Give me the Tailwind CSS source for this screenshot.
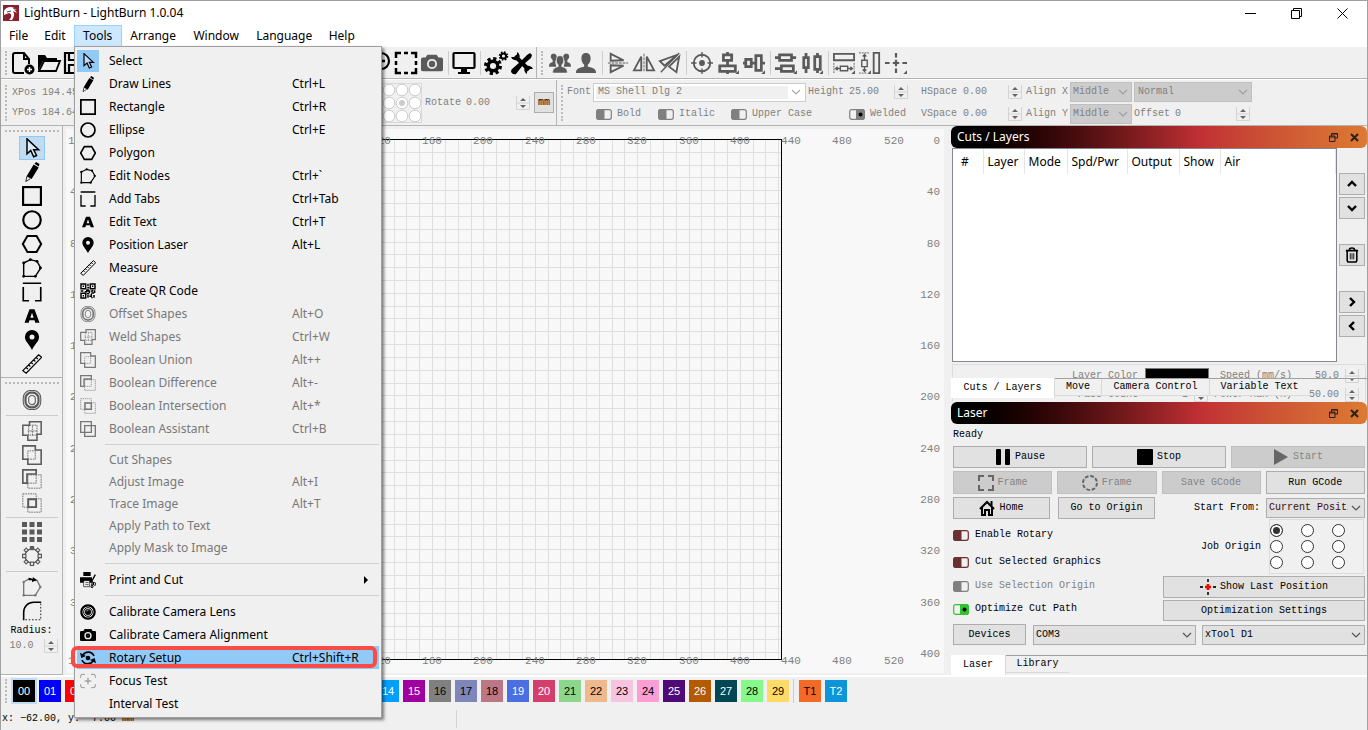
<!DOCTYPE html>
<html lang="en">
<head>
    <meta charset="UTF-8">
    <meta name="viewport" content="width=device-width, initial-scale=1.0">
    <title>LightBurn - LightBurn 1.0.04</title>
    <script src="https://cdn.jsdelivr.net/npm/@tailwindcss/browser@4"></script>
</head>
<body class="bg-[#f0f0f0] text-black font-['Liberation_Mono',monospace] text-[10px] leading-3">

    <!-- Icon sprite -->
    <svg class="hidden">
        <defs>
            <symbol id="cursor" viewBox="0 0 24 24"><path d="M6 1v18l4.500-4 3.500 7.500 3.500-1.500-3.500-7h6z" fill="#fff" fill-opacity=".4" stroke="currentColor" stroke-width="1.800"/></symbol>
            <symbol id="pencil" viewBox="0 0 24 24"><path d="M15 2l2-2 4 2.500-1 3zM14 3l6 3.500-8.500 14-6-3.500z" fill="currentColor"/><path d="M6 17l-1.500 6.500 5.500-3.500" fill="none" stroke="currentColor"/></symbol>
            <symbol id="rect" viewBox="0 0 24 24"><rect x="1.300" y="1.300" width="21.400" height="21.400" fill="none" stroke="currentColor" stroke-width="2.600"/></symbol>
            <symbol id="ellipse" viewBox="0 0 24 24"><circle cx="12" cy="12" r="10.500" fill="none" stroke="currentColor" stroke-width="2.600"/></symbol>
            <symbol id="polygon" viewBox="0 0 24 24"><path d="M6.500 2.500h11L23 12l-5.500 9.500h-11L1 12z" fill="none" stroke="currentColor" stroke-width="2.400"/></symbol>
            <symbol id="nodes" viewBox="0 0 24 24"><path d="M2 6l8-4 8 2 4.500 8-6.500 10H2z" fill="none" stroke="currentColor" stroke-width="1.700"/><g fill="currentColor"><circle cx="2" cy="6" r="1.700"/><circle cx="10" cy="2" r="1.700"/><circle cx="18" cy="4" r="1.700"/><circle cx="22" cy="12" r="1.700"/><circle cx="16" cy="22" r="1.700"/><circle cx="2" cy="22" r="1.700"/></g></symbol>
            <symbol id="tabs" viewBox="0 0 24 24"><path d="M1 1.500h22M1.500 6v16.500h7M22.500 6v16.500h-7" fill="none" stroke="currentColor" stroke-width="2"/></symbol>
            <symbol id="text" viewBox="0 0 24 24"><path fill-rule="evenodd" d="M9 4h6l6 16h-5l-1-3H9l-1 3H3zM12 8l-2 6h4z" fill="currentColor"/></symbol>
            <symbol id="pin" viewBox="0 0 24 24"><path fill-rule="evenodd" d="M12 0a8.500 8.500 0 0 1 8.500 8.500c0 5-5 8.500-8.500 15.500-3.500-7-8.500-10.500-8.500-15.500A8.500 8.500 0 0 1 12 0zm0 5.500a3 3 0 1 0 0 6 3 3 0 0 0 0-6z" fill="currentColor"/></symbol>
            <symbol id="ruler" viewBox="0 0 24 24"><path d="M1 20L20 1l3.500 3L5 23zM5 16l2 2M8 13l2 2M11 10l2 2M14 7l2 2M17 4l2 2" fill="none" stroke="currentColor" stroke-width="1.500"/></symbol>
            <symbol id="qr" viewBox="0 0 24 24"><g fill="none" stroke="currentColor" stroke-width="2.200"><path d="M1.500 1.500h7v7h-7zM15.500 1.500h7v7h-7zM1.500 15.500h7v7h-7zM4 5h2M18 5h2M4 19h2"/><path d="M12 1v6h2M12 9v4H6M1 12h4M10 16h4v-4h5M22 11v4h-5v4M12 18v5M14 20h4v3M21 18v5M9 11h3M19 10v3" stroke-dasharray="4 1"/></g></symbol>
            <symbol id="offset" viewBox="0 0 24 24"><g fill="none" stroke="currentColor"><rect x="1.500" y=".5" width="21" height="23" rx="9" stroke-width="1.300"/><rect x="4.200" y="3.200" width="15.600" height="17.600" rx="7" stroke-width="2.600"/><rect x="8" y="6.500" width="8" height="11" rx="4" stroke-width="1.300"/></g></symbol>
            <symbol id="weld" viewBox="0 0 24 24"><g fill="none" stroke="currentColor" stroke-width="1.800"><path d="M1 5h8V1h14v15h-5v7H7v-6H1z"/><path d="M9 5h9v11M8 6v11h9M12.500 6v12M7 12h12" stroke-width="1" stroke-dasharray="2 1"/></g></symbol>
            <symbol id="union" viewBox="0 0 24 24"><g fill="none" stroke="currentColor" stroke-width="1.900"><path d="M1 1h15v5h7v17H7v-6H1z"/><path d="M7 17V7h9v10z" stroke-width="1" stroke-dasharray="2 1"/></g></symbol>
            <symbol id="diff" viewBox="0 0 24 24"><g fill="none" stroke="currentColor"><path d="M1 1h16v5H6v11H1z" stroke-width="2"/><path d="M7 7h16v16H7zM17 7v10H7" stroke-dasharray="2 1"/></g></symbol>
            <symbol id="inter" viewBox="0 0 24 24"><g fill="none" stroke="currentColor"><path d="M1 1h16v16H1zM7 7h16v16H7z" stroke-dasharray="2 1"/><path d="M7.500 7.500h9.500v9.500H7.500z" stroke-width="2.200"/></g></symbol>
            <symbol id="assist" viewBox="0 0 24 24"><g fill="none" stroke="currentColor" stroke-width="2"><path d="M1 1h16v16H1zM7 7h16v16H7z"/></g></symbol>
            <symbol id="grid9" viewBox="0 0 24 24"><path fill="currentColor" d="M0 0h6v6H0zM9 0h6v6H9zM18 0h6v6h-6zM0 9h6v6H0zM9 9h6v6H9zM18 9h6v6h-6zM0 18h6v6H0zM9 18h6v6H9zM18 18h6v6h-6z"/></symbol>
            <symbol id="ring" viewBox="0 0 24 24"><g fill="#f0f0f0" stroke="currentColor" stroke-width="1.400"><circle cx="12" cy="12" r="8.500"/><path d="M.700 10h4v4h-4zM19.300 10h4v4h-4zM10 19.300h4v4h-4zM5 2.500L7.500 5 5 7.500 2.500 5zM19 2.500L21.500 5 19 7.500 16.500 5zM5 16.500L7.500 19 5 21.500 2.500 19zM19 16.500l2.500 2.500-2.500 2.500-2.500-2.500z"/></g><path fill="currentColor" d="M9.500 0h5v5h-5z"/></symbol>
            <symbol id="arrowpoly" viewBox="0 0 24 24"><path d="M2 6l7-4M15 3l3 1 4 8-6 10H2V6" fill="none" stroke="#777" stroke-width="1.600"/><g fill="#777"><circle cx="2" cy="6" r="1.500"/><circle cx="22" cy="12" r="1.500"/><circle cx="16" cy="22" r="1.500"/><circle cx="2" cy="22" r="1.500"/></g><path d="M8 1l5 1V0l5 4-6 2V4L8 4z" fill="#000"/></symbol>
            <symbol id="fillet" viewBox="0 0 24 24"><path d="M2 23V14A12 12 0 0 1 14 1.500h9" fill="none" stroke="#000" stroke-width="1.900"/><path d="M22.500 3v19.500H3" fill="none" stroke="#000" stroke-dasharray="2 2"/></symbol>
            <symbol id="print" viewBox="0 0 24 24"><path fill="currentColor" d="M5 0h11v6H5zM0 8h18v8H0z"/><path d="M5.500 13h9v9h-9zM8 16h5M8 19h5" fill="#fff" stroke="currentColor"/><path d="M23 4l-6 11M15 12l6 5M18 17v4" stroke="currentColor" stroke-width="2"/><circle cx="22" cy="18" r="2" fill="none" stroke="currentColor" stroke-width="1.500"/><circle cx="18" cy="22" r="1.500" fill="none" stroke="currentColor" stroke-width="1.500"/></symbol>
            <symbol id="lens" viewBox="0 0 24 24"><circle cx="12" cy="12" r="10" fill="none" stroke="currentColor" stroke-width="3.400"/><circle cx="12" cy="12" r="6.500" fill="none" stroke="currentColor" stroke-width="1.500"/><circle cx="12" cy="12" r="4.500" fill="currentColor"/><path d="M10 11a3 3 0 0 1 3-2" stroke="#fff" fill="none"/></symbol>
            <symbol id="camera" viewBox="0 0 24 24"><path fill="currentColor" d="M7 3h10l2 3h3q2 0 2 2v11q0 2-2 2H2q-2 0-2-2V8q0-2 2-2h3z"/><circle cx="12" cy="13" r="4.500" fill="none" stroke="#f0f0f0" stroke-width="2"/></symbol>
            <symbol id="rotary" viewBox="0 0 24 24"><circle cx="12" cy="12" r="3.500" fill="currentColor"/><path d="M4 8a9.500 9.500 0 0 1 17 1M20 16a9.500 9.500 0 0 1-17-1" fill="none" stroke="currentColor" stroke-width="2.500"/><path d="M0 4l2 8 7-3zM24 20l-2-8-7 3z" fill="currentColor"/></symbol>
            <symbol id="focus" viewBox="0 0 24 24"><path d="M7 2H4Q1 2 1 5v2M17 2h3q3 0 3 3v2M7 22H4q-3 0-3-3v-2M17 22h3q3 0 3-3v-2M12 7v10M7 12h10" fill="none" stroke="#888" stroke-width="1.500"/></symbol>

            <symbol id="new" viewBox="0 0 24 24"><path d="M13 22H4q-2 0-2-2V4q0-2 2-2h9l5 6v5M13 2v6h5" fill="none" stroke="currentColor" stroke-width="2"/><circle cx="18.500" cy="18.500" r="5" fill="currentColor"/><path d="M18.500 16v5M16 18.500h5" stroke="#fff" stroke-width="1.500"/></symbol>
            <symbol id="open" viewBox="0 0 24 24"><path d="M1 20V4h7l2 3h10v3H6z" fill="currentColor"/><path d="M7 10h16l-4 10H2z" fill="#f0f0f0" stroke="currentColor" stroke-width="1.800"/></symbol>
            <symbol id="save" viewBox="0 0 24 24"><path d="M2 2h16l4 4v16H2zM6 2v7h10V2M6 22v-8h12v8" fill="none" stroke="currentColor" stroke-width="2.200"/></symbol>
            <symbol id="zoomout" viewBox="0 0 24 24"><circle cx="13" cy="10" r="8" fill="none" stroke="currentColor" stroke-width="2.200"/><path d="M9 10h8M7 16l-6 6" stroke="currentColor" stroke-width="2.400"/></symbol>
            <symbol id="marquee" viewBox="0 0 24 24"><path d="M2 7V2h5M10 2h4M17 2h5v5M22 10v4M22 17v5h-5M14 22h-4M7 22H2v-5M2 14v-4" fill="none" stroke="currentColor" stroke-width="2.500"/></symbol>
            <symbol id="monitor" viewBox="0 0 24 24"><rect x="1.500" y="2" width="21" height="15" rx="1" fill="none" stroke="currentColor" stroke-width="2.200"/><path d="M9 18h6v3h3v2H6v-2h3z" fill="currentColor"/></symbol>
            <symbol id="gears" viewBox="0 0 24 24"><g fill="none" stroke="currentColor"><circle cx="9" cy="15" r="4.800" stroke-width="3.500"/><circle cx="9" cy="15" r="7.500" stroke-width="3" stroke-dasharray="3.200 2.690"/><circle cx="19.500" cy="5" r="2.600" stroke-width="2"/><circle cx="19.500" cy="5" r="4" stroke-width="1.500" stroke-dasharray="1.700 1.440"/></g></symbol>
            <symbol id="wrench" viewBox="0 0 24 24"><path d="M20 2l2 2-1 3-7 6-3-3 6-6zM10 11l3 3-7 9q-3 1-5-2 0-2 1-3z" fill="currentColor"/><path d="M5 5l14 14" stroke="currentColor" stroke-width="4"/><path d="M1 6a5 5 0 0 0 8 2 5 5 0 0 0-2-7v4L5 6zM23 18a5 5 0 0 0-8-2 5 5 0 0 0 2 7v-4l2-1z" fill="currentColor"/></symbol>
            <symbol id="user" viewBox="0 0 24 24"><path fill="currentColor" d="M12 1c4 0 5 3 5 6s-1 5-3 7v2c5 1 9 2 9 7H1c0-5 4-6 9-7v-2C8 12 7 10 7 7s1-6 5-6z"/></symbol>
            <symbol id="users" viewBox="0 0 24 24"><path fill="currentColor" d="M5 2c3 0 3.500 2 3.500 4L7 10v2l1 4H0c0-3 1-4 4-5V9L2 6c0-2 0-4 3-4zM19 2c-3 0-3.500 2-3.500 4l1.500 4v2l-1 4h8c0-3-1-4-4-5V9l2-3c0-2 0-4-3-4z"/><path fill="currentColor" stroke="#f0f0f0" stroke-width=".7" d="M12 4c3 0 4 2 4 5s-1 4-2 5v2c4 1 6 2 6 7H4c0-5 2-6 6-7v-2c-1-1-2-2-2-5s1-5 4-5z"/></symbol>
            <symbol id="flipv" viewBox="0 0 24 24"><g fill="none" stroke="currentColor" stroke-width="2"><path d="M4 2v7.500L18 9zM4 22v-7.500l14 .5z"/><path d="M1 12h22" stroke-dasharray="3 1" stroke-width="2" opacity=".5"/></g></symbol>
            <symbol id="fliph" viewBox="0 0 24 24"><g fill="none" stroke="currentColor" stroke-width="2"><path d="M1 20h8V5zM23 20h-8V5z"/><path d="M12 2v20" stroke-dasharray="3 1" stroke-width="2" opacity=".5"/></g></symbol>
            <symbol id="flipa" viewBox="0 0 24 24"><g fill="none" stroke="currentColor" stroke-width="2"><path d="M1 10L20 3 6 15zM22 5l-3 17-8-6z"/><path d="M2 22L22 1" stroke-width="1.500"/></g></symbol>
            <symbol id="target" viewBox="0 0 24 24"><g fill="none" stroke="currentColor" stroke-width="2"><circle cx="12" cy="12" r="9"/><path d="M12 0v6M12 18v6M0 12h6M18 12h6" stroke-width="1.500"/></g><circle cx="12" cy="12" r="3.200" fill="currentColor"/></symbol>
            <symbol id="alignv" viewBox="0 0 24 24"><g fill="none" stroke="currentColor" stroke-width="3"><path d="M7 3h9v6H7zM3 15h17v6H3zM11.500 9v6M11.500 0v3M11.500 21v3"/></g><path d="M24 20v4h-4z" fill="currentColor"/></symbol>
            <symbol id="alignh" viewBox="0 0 24 24"><g fill="none" stroke="currentColor" stroke-width="3"><path d="M3 8h6v8H3zM14 4h6v16h-6zM9 12h5M0 12h3M20 12h4"/></g><path d="M24 20v4h-4z" fill="currentColor"/></symbol>
            <symbol id="distv" viewBox="0 0 24 24"><g fill="none" stroke="currentColor" stroke-width="3"><path d="M5 3h13v6H5zM7 15h13v6H7zM0 6h5M18 6h5M0 18h7"/></g><path d="M24 20v4h-4z" fill="currentColor"/></symbol>
            <symbol id="disth" viewBox="0 0 24 24"><g fill="none" stroke="currentColor" stroke-width="3"><path d="M3 6h5v11H3zM15 5h6v14h-6zM5.500 1v5M5.500 17v6M18 1v4M18 19v4"/></g><path d="M24 20v4h-4z" fill="currentColor"/></symbol>
            <symbol id="samew" viewBox="0 0 24 24"><g fill="none" stroke="currentColor" stroke-width="1.500"><path d="M1 2h22v7H1z" stroke-width="2"/><path d="M8 15.500h8v5H8zM8 18H3l2-2M3 18l2 2M16 18h5l-2-2M21 18l-2 2"/><path d="M1 12v12M23 12v7" stroke-width="1" stroke-dasharray="2 1"/></g><path d="M24 20v4h-4z" fill="currentColor"/></symbol>
            <symbol id="sameh" viewBox="0 0 24 24"><g fill="none" stroke="currentColor" stroke-width="1.500"><path d="M16 1h6v22h-6z" stroke-width="2"/><path d="M3 9h6v7H3zM6 9V3L4 5M6 3l2 2M6 16v5l-2-2M6 21l2-2"/><path d="M0 1h12M0 23h9" stroke-width="1" stroke-dasharray="2 1"/></g><path d="M13 20v4H9z" fill="currentColor"/></symbol>
            <symbol id="cross" viewBox="0 0 24 24"><path d="M12 1v5M12 18v5M0 12h5M19 12h5M12 8.500v7M8.500 12h7" stroke="currentColor" stroke-width="2.400" fill="none"/><path d="M24 20v4h-4z" fill="currentColor"/></symbol>

            <symbol id="spin" viewBox="0 0 14 14"><path d="M.5 0v13.500h13V0M.5 7h13" fill="none" stroke="#d4d4d4"/><path d="M7 2L4 5h6zM7 12L4 9h6z" fill="#666"/></symbol>
            <symbol id="chev" viewBox="0 0 10 6"><path d="M1 1l4 4 4-4" fill="none" stroke="currentColor" stroke-width="1.200"/></symbol>
            <symbol id="bold-chev" viewBox="0 0 10 10"><path d="M1 7l4-4 4 4" fill="none" stroke="currentColor" stroke-width="2.400"/></symbol>
            <symbol id="float" viewBox="0 0 9 9"><path d="M2.500 3V.5h6V5H6M.5 3h5.500v5.500H.5zM.5 4h5.500M3 1h5" fill="none" stroke="#222"/></symbol>
            <symbol id="x" viewBox="0 0 9 9"><path d="M1 1l7 7M8 1L1 8" stroke="#222" stroke-width="2"/></symbol>
            <symbol id="trash" viewBox="0 0 16 18"><path d="M1 4h14M5 3q0-2 3-2t3 2M2.500 5v10q0 2 2 2h7q2 0 2-2V5" fill="none" stroke="#000" stroke-width="1.800"/><path d="M6 7v7M8 7v7M10 7v7" stroke="#000"/></symbol>
            <symbol id="off" viewBox="0 0 16 11"><rect x=".7" y=".7" width="14.600" height="9.600" rx="2" fill="#f0f0f0" stroke="currentColor" stroke-width="1.200"/><path d="M3 0h5.500v11H3Q0 11 0 8V3Q0 0 3 0z" fill="currentColor"/></symbol>
            <symbol id="on" viewBox="0 0 16 11"><rect x=".7" y=".7" width="14.600" height="9.600" rx="2" fill="#f0f0f0" stroke="currentColor" stroke-width="1.200"/><path d="M13 0H7v11h6q3 0 3-3V3q0-3-3-3z" fill="currentColor"/><circle cx="11.500" cy="5.500" r="2" fill="#000"/></symbol>
        </defs>
    </svg>

    <div class="relative min-h-screen flex flex-col border border-[#a0a0a0]">

        <!-- Title bar -->
        <header class="flex items-center h-6 bg-white font-['Noto_Sans',sans-serif] text-xs">
            <svg class="w-4 h-4 ml-[2px] mr-[5px]" viewBox="0 0 16 16"><path fill="#8c1f2b" d="M0 0h16v16H0z"/><path d="M1 6c2-5 10-5 13-1l-3-1 3 4-4-2c2 3 1 6-1 9H6c3-3 3-6 0-7L1 10z" fill="#fff"/><path d="M3 13l4-3M10 3l4 1M4 7l4-1" stroke="#444"/></svg>
            <h1 class="flex-1">LightBurn - LightBurn 1.0.04</h1>
            <button aria-label="Minimize" class="w-[46px] flex justify-center"><svg class="w-[11px] h-[11px]" viewBox="0 0 11 11"><path d="M0 5.500h11" stroke="#000"/></svg></button>
            <button aria-label="Restore" class="w-[46px] flex justify-center"><svg class="w-[11px] h-[11px]" viewBox="0 0 11 11"><path d="M.5 2.500h8v8h-8zM2.500 2V.5h8v8H9" fill="none" stroke="#000"/></svg></button>
            <button aria-label="Close" class="w-[46px] flex justify-center mr-[2px]"><svg class="w-[11px] h-[11px]" viewBox="0 0 11 11"><path d="M.5.5l10 10M10.500.5l-10 10" stroke="#000"/></svg></button>
        </header>

        <!-- Menu bar -->
        <nav class="flex h-[22px] bg-white font-['Noto_Sans',sans-serif] text-xs">
            <button class="px-2">File</button>
            <button class="px-2">Edit</button>
            <button class="w-12 bg-[#cce8ff] border border-[#99d1ff]">Tools</button>
            <button class="w-[63px]">Arrange</button>
            <button class="w-[63px]">Window</button>
            <button class="w-[73px]">Language</button>
            <button class="px-2">Help</button>
        </nav>

        <!-- Main toolbar -->
        <div class="flex items-center h-8 border-b border-[#b4b4b4] text-[#5a5a5a]">
            <div class="flex items-center self-stretch border-r border-[#b4b4b4] pl-1 pr-[1px] text-black">
                <i class="w-0 h-6 border-l-2 border-dotted border-[#bbb] mr-[3px]"></i>
                <button aria-label="New"><svg class="w-[26px] h-6"><use href="#new"/></svg></button>
                <button aria-label="Open"><svg class="w-[26px] h-6"><use href="#open"/></svg></button>
                <button aria-label="Save"><svg class="w-[26px] h-6"><use href="#save"/></svg></button>
                <span class="w-[279px]"></span>
                <button aria-label="Zoom out"><svg class="w-[26px] h-6"><use href="#zoomout"/></svg></button>
                <button aria-label="Frame selection"><svg class="w-[26px] h-6"><use href="#marquee"/></svg></button>
                <button aria-label="Capture" class="text-[#5a5a5a]"><svg class="w-[26px] h-[22px]"><use href="#camera"/></svg></button>
                <i class="w-[1px] h-6 ml-[3px] mr-[2px] bg-[#ccc]"></i>
                <button aria-label="Preview"><svg class="w-[26px] h-6"><use href="#monitor"/></svg></button>
                <i class="w-[1px] h-6 ml-[3px] mr-[2px] bg-[#ccc]"></i>
                <button aria-label="Settings"><svg class="w-[26px] h-6"><use href="#gears"/></svg></button>
                <button aria-label="Device settings"><svg class="w-[26px] h-6"><use href="#wrench"/></svg></button>
            </div>
            <i class="w-0 h-6 border-l-2 border-dotted border-[#bbb] ml-1 mr-1"></i>
            <button aria-label="Group"><svg class="w-[26px] h-[22px]"><use href="#users"/></svg></button>
            <button aria-label="Ungroup"><svg class="w-[26px] h-[22px]"><use href="#user"/></svg></button>
            <i class="w-[1px] h-6 ml-[3px] mr-[2px] bg-[#ccc]"></i>
            <button aria-label="Flip vertical"><svg class="w-[26px] h-[22px]"><use href="#flipv"/></svg></button>
            <button aria-label="Flip horizontal"><svg class="w-[26px] h-[22px]"><use href="#fliph"/></svg></button>
            <button aria-label="Mirror across line"><svg class="w-[26px] h-[22px]"><use href="#flipa"/></svg></button>
            <i class="w-[1px] h-6 ml-[3px] mr-[2px] bg-[#ccc]"></i>
            <button aria-label="Center"><svg class="w-[26px] h-[22px]"><use href="#target"/></svg></button>
            <button aria-label="Align vertical"><svg class="w-[26px] h-[22px]"><use href="#alignv"/></svg></button>
            <button aria-label="Align horizontal"><svg class="w-[26px] h-[22px]"><use href="#alignh"/></svg></button>
            <i class="w-[1px] h-6 ml-[3px] mr-[2px] bg-[#ccc]"></i>
            <button aria-label="Distribute vertical"><svg class="w-[26px] h-[22px]"><use href="#distv"/></svg></button>
            <button aria-label="Distribute horizontal"><svg class="w-[26px] h-[22px]"><use href="#disth"/></svg></button>
            <i class="w-[1px] h-6 ml-[3px] mr-[2px] bg-[#ccc]"></i>
            <button aria-label="Same width"><svg class="w-[26px] h-[22px]"><use href="#samew"/></svg></button>
            <button aria-label="Same height"><svg class="w-[26px] h-[22px]"><use href="#sameh"/></svg></button>
            <button aria-label="Move to laser"><svg class="w-[26px] h-[22px]"><use href="#cross"/></svg></button>
        </div>

        <!-- Numeric and font toolbars -->
        <div class="flex h-[47px] border-t border-t-white border-b border-b-[#b4b4b4] text-[#808080]">
            <div class="flex items-center w-[556px] border-r border-[#b4b4b4] pl-1">
                <i class="w-0 h-9 border-l-2 border-dotted border-[#bbb] mr-[5px]"></i>
                <div class="flex-1 flex flex-col gap-2">
                    <label class="flex gap-[6px]">XPos <input class="w-20" value="194.450"></label>
                    <label class="flex gap-[6px]">YPos <input class="w-20" value="184.640"></label>
                </div>
                <svg class="w-10 h-10 border border-[#d9d9d9] mr-[3px]" viewBox="0 0 38 38"><g fill="#fff" stroke="#ccc"><circle cx="6" cy="6" r="5.800"/><circle cx="19" cy="6" r="5.800"/><circle cx="32" cy="6" r="5.800"/><circle cx="6" cy="19" r="5.800"/><circle cx="19" cy="19" r="5.800"/><circle cx="32" cy="19" r="5.800"/><circle cx="6" cy="32" r="5.800"/><circle cx="19" cy="32" r="5.800"/><circle cx="32" cy="32" r="5.800"/></g><circle cx="19" cy="19" r="3" fill="#ccc"/></svg>
                <label for="rotate" class="w-[41px]">Rotate</label>
                <input id="rotate" class="w-[50px]" value="0.00">
                <svg class="w-[14px] h-[14px]"><use href="#spin"/></svg>
                <button class="w-5 h-[21px] ml-1 mr-[2px] border border-[#adadad] bg-[#e1e1e1] text-black">mm</button>
            </div>
            <i class="w-0 h-9 self-center border-l-2 border-dotted border-[#bbb] ml-1 mr-1"></i>
            <div class="flex flex-col gap-[2px] pt-[2px]">
                <div class="flex items-center h-5">
                    <label for="font" class="w-[26px]">Font</label>
                    <div class="relative w-[213px] mr-[2px]">
                        <select id="font" class="appearance-none w-full h-[19px] bg-[#f0f0f0] border border-[#ccc] outline-2 -outline-offset-3 outline-white pl-1"><option>MS Shell Dlg 2</option></select>
                        <span class="absolute right-[2px] top-[2px] w-4 h-[15px] bg-white flex items-center justify-center text-[#aaa] pointer-events-none"><svg class="w-[10px] h-[6px]"><use href="#chev"/></svg></span>
                    </div>
                    <label for="height" class="w-[41px]">Height</label>
                    <input id="height" class="w-[45px]" value="25.00">
                    <svg class="w-[14px] h-[14px] mr-[13px]"><use href="#spin"/></svg>
                    <label for="hspace" class="w-[42px]">HSpace</label>
                    <input id="hspace" class="w-[45px]" value="0.00">
                    <svg class="w-[14px] h-[14px] mr-1"><use href="#spin"/></svg>
                    <label for="alignx" class="w-[44px]">Align X</label>
                    <div class="relative w-[62px] mr-[2px]">
                        <select id="alignx" class="appearance-none w-full h-5 bg-[#ccc] border border-[#bfbfbf] pl-[2px]"><option>Middle</option></select>
                        <svg class="absolute right-1 top-[7px] w-[10px] h-[6px] text-[#a0a0a0]"><use href="#chev"/></svg>
                    </div>
                    <div class="relative w-[118px]">
                        <select aria-label="Text mode" class="appearance-none w-full h-5 bg-[#ccc] border border-[#bfbfbf] pl-[3px]"><option>Normal</option></select>
                        <svg class="absolute right-1 top-[7px] w-[10px] h-[6px] text-[#a0a0a0]"><use href="#chev"/></svg>
                    </div>
                </div>
                <div class="flex items-center h-5">
                    <button class="flex items-center gap-[5px] w-[62px] ml-[29px]"><svg class="w-4 h-[11px]"><use href="#off"/></svg>Bold</button>
                    <button class="flex items-center gap-[5px] w-[73px]"><svg class="w-4 h-[11px]"><use href="#off"/></svg>Italic</button>
                    <button class="flex items-center gap-[5px] w-[118px]"><svg class="w-4 h-[11px]"><use href="#off"/></svg>Upper Case</button>
                    <button class="flex items-center gap-[5px] w-[72px]"><svg class="w-4 h-[11px]"><use href="#on"/></svg>Welded</button>
                    <label for="vspace" class="w-[42px]">VSpace</label>
                    <input id="vspace" class="w-[45px]" value="0.00">
                    <svg class="w-[14px] h-[14px] mr-1"><use href="#spin"/></svg>
                    <label for="aligny" class="w-[44px]">Align Y</label>
                    <div class="relative w-[62px] mr-[2px]">
                        <select id="aligny" class="appearance-none w-full h-5 bg-[#ccc] border border-[#bfbfbf] pl-[2px]"><option>Middle</option></select>
                        <svg class="absolute right-1 top-[7px] w-[10px] h-[6px] text-[#a0a0a0]"><use href="#chev"/></svg>
                    </div>
                    <label for="offsetv" class="w-[41px]">Offset</label>
                    <input id="offsetv" class="w-[61px]" value="0">
                    <svg class="w-[14px] h-[14px]"><use href="#spin"/></svg>
                </div>
            </div>
        </div>

        <main class="flex flex-1">
            <!-- Left tool column -->
            <aside class="w-[62px] flex flex-col border-r border-b border-[#b4b4b4]">
                <div class="flex flex-col items-center pt-1 pb-[1px] border-b border-[#b4b4b4]">
                    <i class="w-[54px] h-0 border-t-2 border-dotted border-[#bbb] mb-1"></i>
                    <button aria-label="Select" class="w-[26px] h-6 flex justify-center items-center bg-[#c0dcf3] border border-[#90c8f6]"><svg class="w-5 h-5"><use href="#cursor"/></svg></button>
                    <button aria-label="Draw Lines" class="h-6"><svg class="w-5 h-5"><use href="#pencil"/></svg></button>
                    <button aria-label="Rectangle" class="h-6"><svg class="w-5 h-5"><use href="#rect"/></svg></button>
                    <button aria-label="Ellipse" class="h-6"><svg class="w-5 h-5"><use href="#ellipse"/></svg></button>
                    <button aria-label="Polygon" class="h-6"><svg class="w-[22px] h-5"><use href="#polygon"/></svg></button>
                    <button aria-label="Edit Nodes" class="h-6"><svg class="w-5 h-5"><use href="#nodes"/></svg></button>
                    <button aria-label="Add Tabs" class="h-6"><svg class="w-5 h-5"><use href="#tabs"/></svg></button>
                    <button aria-label="Edit Text" class="h-6"><svg class="w-5 h-5"><use href="#text"/></svg></button>
                    <button aria-label="Position Laser" class="h-6"><svg class="w-5 h-5"><use href="#pin"/></svg></button>
                    <button aria-label="Measure" class="h-6"><svg class="w-5 h-5"><use href="#ruler"/></svg></button>
                </div>
                <div class="flex-1 flex flex-col items-center pt-1 text-[#5a5a5a]">
                    <i class="w-[54px] h-0 border-t-2 border-dotted border-[#bbb] mb-1"></i>
                    <button aria-label="Offset Shapes" class="h-6"><svg class="w-5 h-5"><use href="#offset"/></svg></button>
                    <i class="w-[52px] h-[1px] bg-[#ccc] my-[3px]"></i>
                    <button aria-label="Weld" class="h-6"><svg class="w-5 h-5"><use href="#weld"/></svg></button>
                    <button aria-label="Union" class="h-6"><svg class="w-5 h-5"><use href="#union"/></svg></button>
                    <button aria-label="Difference" class="h-6"><svg class="w-5 h-5"><use href="#diff"/></svg></button>
                    <button aria-label="Intersection" class="h-6"><svg class="w-5 h-5"><use href="#inter"/></svg></button>
                    <i class="w-[52px] h-[1px] bg-[#ccc] my-[2px]"></i>
                    <button aria-label="Grid array" class="h-6"><svg class="w-5 h-5"><use href="#grid9"/></svg></button>
                    <button aria-label="Circular array" class="h-6"><svg class="w-5 h-5"><use href="#ring"/></svg></button>
                    <i class="w-[52px] h-[1px] bg-[#ccc] my-[3px]"></i>
                    <button aria-label="Start point" class="h-6"><svg class="w-5 h-5"><use href="#arrowpoly"/></svg></button>
                    <button aria-label="Radius tool" class="h-6"><svg class="w-5 h-5"><use href="#fillet"/></svg></button>
                    <label for="radius" class="w-[42px] mt-[2px] text-black">Radius:</label>
                    <div class="flex items-center w-[48px] ml-1 mt-[2px] text-[#808080]">
                        <input id="radius" class="w-[34px]" value="10.0">
                        <svg class="w-[14px] h-[14px]"><use href="#spin"/></svg>
                    </div>
                </div>
            </aside>

            <!-- Workspace -->
            <div class="flex-1 flex bg-[#f8f8f8] border-t-3 border-l-3 border-b-2 border-[#f0f0f0]">
                <svg id="bed" class="flex-1 w-0"></svg>
            </div>

            <!-- Dock panels -->
            <aside class="w-[416px] ml-[7px] flex flex-col">
                <section>
                    <header class="flex items-center h-[22px] rounded-md bg-linear-to-r from-black via-[#c03034] via-60% to-[#dc7a32] pl-[6px] pr-2 font-['Noto_Sans',sans-serif] text-xs text-white">
                        <h2 class="flex-1">Cuts / Layers</h2>
                        <button aria-label="Float" class="mr-3"><svg class="w-[9px] h-[9px]"><use href="#float"/></svg></button>
                        <button aria-label="Close"><svg class="w-[9px] h-[9px]"><use href="#x"/></svg></button>
                    </header>
                    <div class="flex pl-[1px] gap-[2px]">
                        <div class="flex-1 h-[214px] border border-[#828790] bg-white">
                            <table class="w-full table-fixed font-['Noto_Sans',sans-serif] text-xs">
                                <thead>
                                    <tr class="h-[25px] *:font-normal *:text-left *:pl-1 *:border-r *:border-[#e5e5e5]">
                                        <th class="w-[30px]"><span class="pl-1">#</span></th>
                                        <th class="w-[41px]">Layer</th>
                                        <th class="w-[43px]">Mode</th>
                                        <th class="w-[60px]">Spd/Pwr</th>
                                        <th class="w-[52px]">Output</th>
                                        <th class="w-[41px]">Show</th>
                                        <th>Air</th>
                                    </tr>
                                </thead>
                            </table>
                        </div>
                        <div class="flex flex-col w-[28px] pt-[25px]">
                            <button aria-label="Move up" class="w-[26px] h-[22px] flex items-center justify-center border border-[#adadad] bg-[#e1e1e1]"><svg class="w-[10px] h-[10px]"><use href="#bold-chev"/></svg></button>
                            <button aria-label="Move down" class="w-[26px] h-[22px] mt-[2px] flex items-center justify-center border border-[#adadad] bg-[#e1e1e1]"><svg class="w-[10px] h-[10px] rotate-180"><use href="#bold-chev"/></svg></button>
                            <button aria-label="Delete" class="w-[26px] h-[22px] mt-[25px] flex items-center justify-center border border-[#adadad] bg-[#e1e1e1]"><svg class="w-[14px] h-4"><use href="#trash"/></svg></button>
                            <button aria-label="Next" class="w-[26px] h-[22px] mt-[25px] flex items-center justify-center border border-[#adadad] bg-[#e1e1e1]"><svg class="w-[10px] h-[10px] rotate-90"><use href="#bold-chev"/></svg></button>
                            <button aria-label="Previous" class="w-[26px] h-[22px] mt-[2px] flex items-center justify-center border border-[#adadad] bg-[#e1e1e1]"><svg class="w-[10px] h-[10px] -rotate-90"><use href="#bold-chev"/></svg></button>
                        </div>
                    </div>
                    <!-- Cut settings, partly covered by the tab strip -->
                    <div class="relative h-10 pt-[2px]">
                        <div class="ml-[1px] mr-[1px] h-[38px] pt-1 border border-[#dcdcdc] border-b-0 text-[#808080] flex flex-col gap-[5px] overflow-hidden">
                            <div class="flex items-center justify-end h-[14px] pr-[6px]">
                                <span class="w-[73px]">Layer Color</span>
                                <span class="w-16 h-4 bg-black border border-[#777] mr-[11px]"></span>
                                <label for="speed" class="w-[89px]">Speed (mm/s)</label>
                                <input id="speed" class="w-[30px] text-right mr-[6px]" value="50.0">
                                <svg class="w-[14px] h-[14px]"><use href="#spin"/></svg>
                            </div>
                            <div class="flex items-center justify-end h-[14px] pr-[6px]">
                                <label for="passes" class="w-[80px]">Pass Count</label>
                                <input id="passes" class="w-[30px] text-right mr-[6px]" value="1">
                                <svg class="w-[14px] h-[14px] mr-[6px]"><use href="#spin"/></svg>
                                <label for="power" class="w-[95px]">Power Max (%)</label>
                                <input id="power" class="w-[30px] text-right mr-[6px]" value="50.00">
                                <svg class="w-[14px] h-[14px]"><use href="#spin"/></svg>
                            </div>
                        </div>
                        <div class="absolute left-0 right-0 top-4 flex items-start">
                            <button class="w-[104px] h-5 bg-white border-r border-[#d9d9d9]">Cuts / Layers</button>
                            <div class="flex-1 flex items-start border-t border-[#a0a0a0]">
                                <button class="w-[47px] h-[17px] bg-[#f0f0f0] border-r border-b border-[#d9d9d9]">Move</button>
                                <button class="w-[108px] h-[17px] bg-[#f0f0f0] border-r border-b border-[#d9d9d9]">Camera Control</button>
                                <button class="w-[99px] h-[17px] bg-[#f0f0f0] border-b border-[#d9d9d9]">Variable Text</button>
                            </div>
                        </div>
                    </div>
                </section>

                <section class="flex-1 flex flex-col">
                    <header class="flex items-center h-[22px] rounded-md bg-linear-to-r from-black via-[#c03034] via-60% to-[#dc7a32] pl-[6px] pr-2 font-['Noto_Sans',sans-serif] text-xs text-white">
                        <h2 class="flex-1">Laser</h2>
                        <button aria-label="Float" class="mr-3"><svg class="w-[9px] h-[9px]"><use href="#float"/></svg></button>
                        <button aria-label="Close"><svg class="w-[9px] h-[9px]"><use href="#x"/></svg></button>
                    </header>
                    <div class="pl-[2px] pr-[2px]">
                        <p class="h-[22px] pt-[5px]">Ready</p>
                        <div class="grid grid-cols-3 gap-[5px]">
                            <button class="h-[22px] flex items-center justify-center gap-1 border border-[#adadad] bg-[#e1e1e1]"><svg class="w-4 h-4" viewBox="0 0 16 16"><rect x="1" width="5" height="16" rx="1"/><rect x="10" width="5" height="16" rx="1"/></svg>Pause</button>
                            <button class="h-[22px] flex items-center justify-center gap-1 border border-[#adadad] bg-[#e1e1e1]"><svg class="w-4 h-4" viewBox="0 0 16 16"><rect width="16" height="16" rx="1"/></svg>Stop</button>
                            <button class="h-[22px] flex items-center justify-center gap-1 border border-[#bfbfbf] bg-[#ccc] text-[#838383]"><svg class="w-4 h-4" viewBox="0 0 16 16"><path d="M1 0l14 8-14 8z" fill="#666"/></svg>Start</button>
                        </div>
                        <div class="grid grid-cols-4 gap-[5px] mt-[3px]">
                            <button class="h-[23px] flex items-center justify-center gap-1 border border-[#bfbfbf] bg-[#ccc] text-[#838383]"><svg class="w-4 h-4" viewBox="0 0 16 16"><path d="M1 6V1h5M10 1h5v5M15 10v5h-5M6 15H1v-5" fill="none" stroke="#666" stroke-width="2"/></svg>Frame</button>
                            <button class="h-[23px] flex items-center justify-center gap-1 border border-[#bfbfbf] bg-[#ccc] text-[#838383]"><svg class="w-4 h-4" viewBox="0 0 16 16"><circle cx="8" cy="8" r="7" fill="none" stroke="#666" stroke-width="2" stroke-dasharray="3.700 1.800"/></svg>Frame</button>
                            <button class="h-[23px] border border-[#bfbfbf] bg-[#ccc] text-[#838383]">Save GCode</button>
                            <button class="h-[23px] border border-[#adadad] bg-[#e1e1e1]">Run GCode</button>
                        </div>
                        <div class="flex items-center mt-[3px]">
                            <button class="w-[97px] h-[22px] mr-2 flex items-center justify-center gap-1 border border-[#adadad] bg-[#e1e1e1]"><svg class="w-4 h-4" viewBox="0 0 16 16"><path d="M1 9l7-7 7 7M12.500 6V1" fill="none" stroke="#000" stroke-width="2"/><path d="M3 7v8h3v-5h4v5h3V7" fill="none" stroke="#000" stroke-width="2"/></svg>Home</button>
                            <button class="w-[97px] h-[22px] border border-[#adadad] bg-[#e1e1e1]">Go to Origin</button>
                            <label for="startfrom" class="ml-auto mr-[6px]">Start From:</label>
                            <div class="relative w-[99px]">
                                <select id="startfrom" class="appearance-none w-full h-5 bg-[#e1e1e1] border border-[#adadad] pl-[2px] pr-4 text-[#3c0a0a]"><option>Current Position</option></select>
                                <svg class="absolute right-1 top-[7px] w-[10px] h-[6px] text-[#555]"><use href="#chev"/></svg>
                            </div>
                        </div>
                        <div class="flex mt-[1px]">
                            <div class="flex-1 flex flex-col items-start">
                                <button class="flex items-center gap-[6px] mt-[9px]"><svg class="w-4 h-[11px] text-[#6b3030]"><use href="#off"/></svg>Enable Rotary</button>
                                <button class="flex items-center gap-[6px] mt-[15px]"><svg class="w-4 h-[11px] text-[#6b3030]"><use href="#off"/></svg>Cut Selected Graphics</button>
                                <button class="flex items-center gap-[6px] mt-3 text-[#808080]"><svg class="w-4 h-[11px]"><use href="#off"/></svg>Use Selection Origin</button>
                                <button class="flex items-center gap-[6px] mt-[11px]"><svg class="w-4 h-[11px] text-[#2fc42f]"><use href="#on"/></svg>Optimize Cut Path</button>
                            </div>
                            <div class="w-[202px] flex flex-col gap-[2px]">
                                <div class="flex items-center justify-end gap-2 h-[53px] mb-[1px]">
                                    <span>Job Origin</span>
                                    <div id="origin" class="grid grid-cols-3 w-[95px] gap-y-[3px] py-1 mr-[1px] border border-[#dcdcdc]"></div>
                                </div>
                                <button class="h-[22px] flex items-center justify-center gap-1 border border-[#adadad] bg-[#e1e1e1]"><svg class="w-4 h-4" viewBox="0 0 16 16"><path d="M8 0v3M8 13v3M0 8h3M13 8h3" stroke="#222" stroke-width="1.800"/><path d="M8 5v6M5 8h6" stroke="red" stroke-width="2.600"/></svg>Show Last Position</button>
                                <button class="h-[21px] border border-[#adadad] bg-[#e1e1e1]">Optimization Settings</button>
                            </div>
                        </div>
                        <div class="flex items-center mt-[3px]">
                            <button class="w-[73px] h-[21px] mr-[7px] border border-[#adadad] bg-[#e1e1e1]">Devices</button>
                            <div class="relative flex-1 mr-[6px]">
                                <select aria-label="Port" class="appearance-none w-full h-5 bg-[#e1e1e1] border border-[#adadad] pl-[2px]"><option>COM3</option></select>
                                <svg class="absolute right-1 top-[7px] w-[10px] h-[6px] text-[#555]"><use href="#chev"/></svg>
                            </div>
                            <div class="relative flex-1">
                                <select aria-label="Device" class="appearance-none w-full h-5 bg-[#e1e1e1] border border-[#adadad] pl-[2px]"><option>xTool D1</option></select>
                                <svg class="absolute right-1 top-[7px] w-[10px] h-[6px] text-[#555]"><use href="#chev"/></svg>
                            </div>
                        </div>
                    </div>
                    <div class="flex items-start mt-[10px]">
                        <button class="w-[55px] h-5 bg-white border-r border-[#d9d9d9]">Laser</button>
                        <div class="flex-1 border-t border-[#a0a0a0]">
                            <button class="w-[63px] h-[17px] border-b border-[#d9d9d9]">Library</button>
                        </div>
                    </div>
                </section>
            </aside>
        </main>

        <!-- Layer palette -->
        <div class="flex items-center h-8 border-t-2 border-white pl-1 pb-[2px] font-['Liberation_Sans',sans-serif] text-[11px]">
            <i class="w-0 h-6 border-l-2 border-dotted border-[#bbb] mr-1"></i>
            <div id="palette" class="flex items-center"></div>
        </div>

        <!-- Status bar -->
        <footer class="flex items-center h-[23px] pl-[1px]">
            <span class="w-[454px]">x: −62.00, y: −7.00 mm</span>
            <i class="w-[1px] h-[18px] bg-[#d4d4d4]"></i>
        </footer>

        <!-- Tools menu -->
        <div id="tools-menu" class="absolute left-[73px] top-[45px] w-[308px] p-[2px] bg-[#f0f0f0] border border-[#a0a0a0] shadow-[2px_2px_3px_rgba(0,0,0,0.5)] font-['Noto_Sans',sans-serif] text-xs"></div>
    </div>

    <script>
        // [label, shortcut, icon, state]
        const menuItems = [
            ['Select', '', 'cursor', 'active'],
            ['Draw Lines', 'Ctrl+L', 'pencil'],
            ['Rectangle', 'Ctrl+R', 'rect'],
            ['Ellipse', 'Ctrl+E', 'ellipse'],
            ['Polygon', '', 'polygon'],
            ['Edit Nodes', 'Ctrl+`', 'nodes'],
            ['Add Tabs', 'Ctrl+Tab', 'tabs'],
            ['Edit Text', 'Ctrl+T', 'text'],
            ['Position Laser', 'Alt+L', 'pin'],
            ['Measure', '', 'ruler'],
            ['Create QR Code', '', 'qr'],
            ['Offset Shapes', 'Alt+O', 'offset', 'off'],
            ['Weld Shapes', 'Ctrl+W', 'weld', 'off'],
            ['Boolean Union', 'Alt++', 'union', 'off'],
            ['Boolean Difference', 'Alt+-', 'diff', 'off'],
            ['Boolean Intersection', 'Alt+*', 'inter', 'off'],
            ['Boolean Assistant', 'Ctrl+B', 'assist', 'off'],
            null,
            ['Cut Shapes', '', '', 'off'],
            ['Adjust Image', 'Alt+I', '', 'off'],
            ['Trace Image', 'Alt+T', '', 'off'],
            ['Apply Path to Text', '', '', 'off'],
            ['Apply Mask to Image', '', '', 'off'],
            null,
            ['Print and Cut', '', 'print', 'sub'],
            null,
            ['Calibrate Camera Lens', '', 'lens'],
            ['Calibrate Camera Alignment', '', 'camera'],
            ['Rotary Setup', 'Ctrl+Shift+R', 'rotary', 'hover'],
            ['Focus Test', '', 'focus'],
            ['Interval Test', '', ' ']
        ];

        document.getElementById('tools-menu').innerHTML = menuItems.map(item => {
            if (!item) return '<div class="h-[9px] pl-7 flex items-center"><hr class="flex-1 border-[#d0d0d0]"></div>';
            const [label, key, icon, state] = item;
            const height = icon ? 'h-[23px]' : 'h-[22px]';
            const color = state === 'off' ? 'text-[#787878]' : 'text-black';
            const bg = state === 'hover' ? 'bg-[#91c9f7]' : '';
            const iconBg = state === 'active' ? 'bg-[#91c9f7]' : '';
            return `
                <button class="relative w-full flex items-center text-left ${height} ${color} ${bg}">
                    <span class="w-[22px] h-[22px] mr-[10px] flex items-center justify-center ${iconBg}">${icon.trim() ? `<svg class="w-4 h-4"><use href="#${icon}"/></svg>` : ''}</span>
                    <span class="w-[183px]">${label}</span>
                    <span class="flex-1">${key}</span>
                    ${state === 'sub' ? '<svg class="w-1 h-2 mr-[11px]" viewBox="0 0 4 8"><path d="M0 0l4 4-4 4z"/></svg>' : ''}
                    ${state === 'hover' ? '<span class="absolute -left-[6px] right-[2px] top-0 h-[22px] rounded-md border-4 border-[#fa4b46]"></span>' : ''}
                </button>`;
        }).join('');

        // Layer colors: [background, text]
        const W = '#fff', B = '#000';
        const layers = [
            ['#000000', W], ['#0000ff', W], ['#ff0000', W], ['#00e000', B], ['#d0d000', B],
            ['#ff8000', B], ['#00e0e0', B], ['#ff00ff', W], ['#b4b4b4', B], ['#0000a0', W],
            ['#a00000', W], ['#00a000', W], ['#a0a000', B], ['#c08000', B], ['#00a0ff', W],
            ['#a000a0', W], ['#808080', B], ['#7d87b9', B], ['#bb7784', B], ['#4a6fe3', W],
            ['#d33f6a', W], ['#8cd78c', B], ['#f0b98d', B], ['#f6c4e1', B], ['#fa9ed4', B],
            ['#500a78', W], ['#b45a00', W], ['#004754', W], ['#86fa88', B], ['#ffdb66', B],
            ['#f36926', B], ['#0c96d9', W]
        ];
        document.getElementById('palette').innerHTML = layers.map(([bg, fg], i) => {
            const name = i < 30 ? String(i).padStart(2, '0') : 'T' + (i - 29);
            const sep = i === 30 ? '<i class="w-[1px] h-6 ml-[2px] mr-[3px] bg-[#ccc]"></i>' : '';
            const ring = i === 0 ? 'outline-2 outline-[#c0dcf3]' : '';
            return `${sep}<button class="w-[22px] h-[22px] mx-[2px] ${ring}" style="background:${bg};color:${fg}">${name}</button>`;
        }).join('');

        // Job origin radios
        document.getElementById('origin').innerHTML = Array.from({ length: 9 }, (_, i) =>
            `<input type="radio" name="origin" aria-label="Origin ${i + 1}" ${i === 0 ? 'checked' : ''} class="appearance-none w-[13px] h-[13px] rounded-full bg-white border border-[#333] checked:bg-[#333] checked:shadow-[inset_0_0_0_2px_#fff]">`
        ).join('');

        // Work bed: 432 x 406 mm with a 10 mm grid
        function drawBed() {
            const svg = document.getElementById('bed');
            const scale = 1.282, left = 161, top = 10, mmW = 432, mmH = 406;
            const w = svg.clientWidth;
            const right = left + mmW * scale, bottom = Math.round(top + mmH * scale);
            let out = '';
            for (let x = 0; x < mmW; x += 10) {
                const px = Math.round(left + x * scale) + 0.5;
                out += `<path d="M${px} ${top}V${bottom}" stroke="#dfdfdf"/>`;
            }
            for (let y = 0; y < mmH; y += 10) {
                const py = Math.round(top + y * scale) + 0.5;
                out += `<path d="M${left} ${py}H${right}" stroke="#dfdfdf"/>`;
            }
            out += `<rect x="${left + 0.5}" y="${top + 0.5}" width="${Math.round(mmW * scale)}" height="${bottom - top}" fill="none" stroke="#000"/>`;
            // the rest of the horizontal scale lies under the open menu
            out += `<text x="2" y="${top + 5}">120</text>`;
            out += `<text x="2" y="${bottom + 5}">120</text>`;
            for (let x = 120; x <= 520; x += 40) {
                const px = Math.round(left + x * scale);
                out += `<text x="${px}" y="${top + 5}" text-anchor="middle">${x}</text>`;
                out += `<text x="${px}" y="${bottom + 5}" text-anchor="middle">${x}</text>`;
            }
            for (let y = 0; y <= 400; y += 40) {
                const py = Math.round(top + y * scale) + 5;
                if (y > 0 && y < 400) out += `<text x="4" y="${py}">${y}</text>`;
                out += `<text x="${w - 4}" y="${py}" text-anchor="end">${y}</text>`;
            }
            svg.innerHTML = `<g font-size="11" fill="#808080" font-family="Liberation Mono">${out}</g>`;
        }
        drawBed();
        window.addEventListener('resize', drawBed);
    </script>
</body>
</html>
